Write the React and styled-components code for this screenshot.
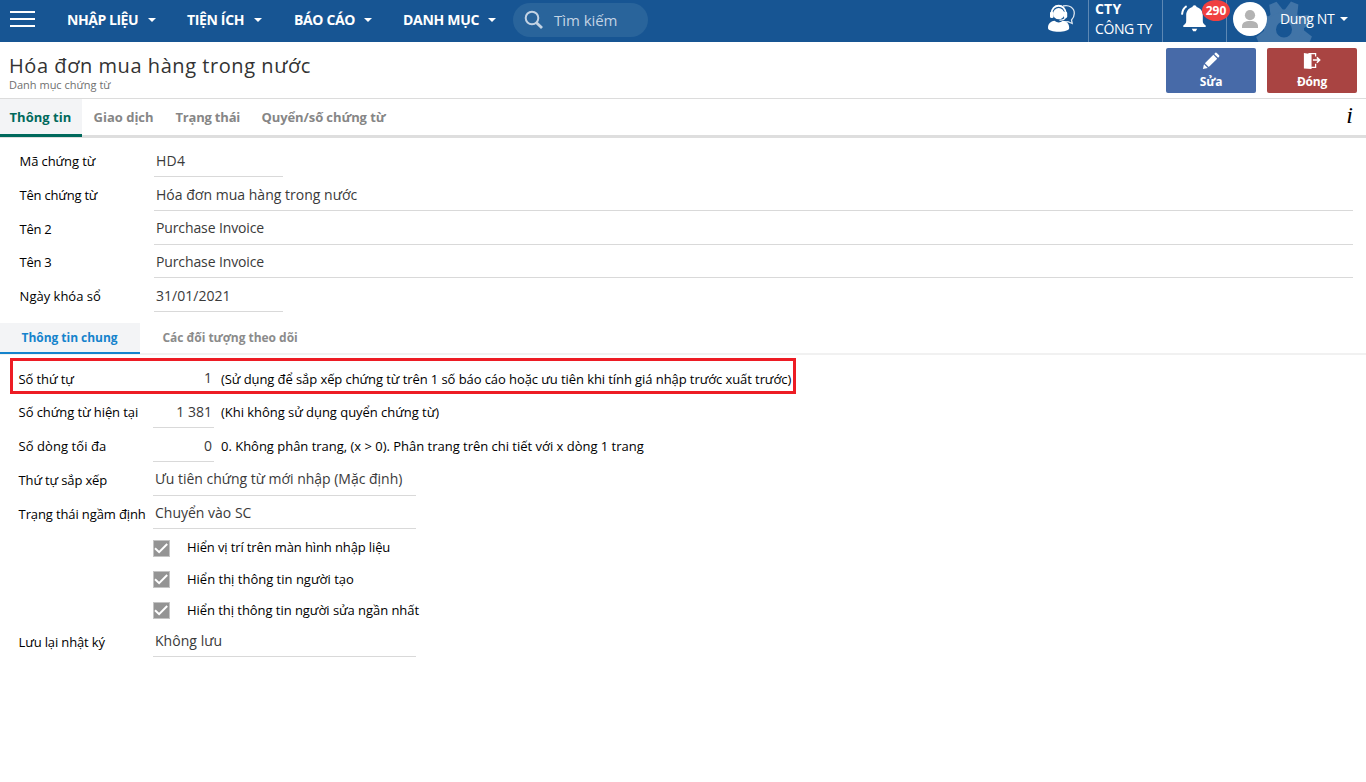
import React from 'react';
import styled, { createGlobalStyle } from 'styled-components';

const GlobalStyle = createGlobalStyle`
  * { box-sizing: border-box; }
  body {
    margin: 0;
    background: #fff;
    color: #111;
    font: 13px/18px 'Open Sans', 'Noto Sans', sans-serif;
    white-space: nowrap;
  }
`;

/* ---------- top bar ---------- */

const TopBar = styled.header`
  display: flex;
  height: 42px;
  overflow: hidden;
  background: #175593;
  color: #fff;
`;

const Hamburger = styled.div`
  display: flex;
  flex-direction: column;
  gap: 5px;
  width: 25px;
  margin: 11px 32px 0 10px;
`;

const HamburgerBar = styled.span`
  height: 2px;
  background: #fff;
`;

const Menu = styled.nav`
  display: flex;
  height: 40px;
`;

const MenuItem = styled.div`
  display: flex;
  align-items: center;
  width: ${(p) => p.$width}px;
  font-size: 14px;
  font-weight: 700;
  letter-spacing: ${(p) => p.$tracking}px;
`;

const MenuLabel = styled.span`
  width: ${(p) => p.$width}px;
`;

const Caret = styled.i`
  border: 4px solid transparent;
  border-top-color: #fff;
  border-bottom: 0;
`;

const Search = styled.div`
  display: flex;
  align-items: center;
  width: 135px;
  height: 34px;
  margin-top: 3px;
  padding-left: 11px;
  gap: 10px;
  border-radius: 17px;
  background: #29649b;
  color: #c3d3e4;
  font-size: 15px;
  letter-spacing: -0.05px;
`;

const TopRight = styled.div`
  display: flex;
  margin-left: auto;
`;

const Support = styled.div`
  width: 40px;
  padding-top: 4px;
`;

const Company = styled.div`
  width: 75px;
  padding-left: 6px;
  border: solid #5d88b4;
  border-width: 0 1px;
  font-size: 14px;
  line-height: 20px;
  letter-spacing: -0.4px;
`;

const CompanyCode = styled.div`
  height: 19px;
  line-height: 18px;
  font-weight: 700;
  letter-spacing: 0.2px;
`;

const Notifications = styled.div`
  position: relative;
  width: 64px;
  padding: 3px 0 0 17px;
  border-right: 1px solid #5d88b4;
`;

const Badge = styled.span`
  position: absolute;
  top: 0;
  left: 39px;
  width: 28px;
  height: 21px;
  border-radius: 50%;
  background: #f04040;
  font-size: 12px;
  font-weight: 700;
  line-height: 21px;
  text-align: center;
`;

const User = styled.div`
  position: relative;
  display: flex;
  width: 139px;
  padding-left: 6px;
`;

const Avatar = styled.div`
  position: relative;
  width: 34px;
  height: 34px;
  margin: 2px 13px 0 0;
  border-radius: 50%;
  background: #fff;
`;

const GearBackdrop = styled.svg`
  position: absolute;
  top: 0;
  left: 29px;
`;

const UserName = styled.span`
  position: relative;
  display: flex;
  align-items: center;
  height: 38px;
  gap: 6px;
  font-size: 14px;
  letter-spacing: -0.35px;
`;

/* ---------- page heading ---------- */

const Heading = styled.section`
  display: flex;
  justify-content: space-between;
  height: 57px;
  padding: 6px 9px 0 9px;
  border-bottom: 1px solid #dcdcdc;
`;

const Title = styled.h1`
  margin: 4px 0 0;
  color: #333;
  font-size: 20px;
  font-weight: 400;
  line-height: 27px;
  letter-spacing: 0.56px;
`;

const Subtitle = styled.div`
  color: #707070;
  font-size: 11px;
  line-height: 11px;
`;

const Actions = styled.div`
  display: flex;
  gap: 11px;
`;

const ActionButton = styled.button`
  display: flex;
  flex-direction: column;
  align-items: center;
  width: 90px;
  height: 45px;
  padding: 4px 0 0;
  border: 0;
  border-radius: 2px;
  background: ${(p) => p.$color};
  color: #fff;
  font: 700 12px/23px 'Open Sans', 'Noto Sans', sans-serif;
  letter-spacing: -0.2px;
`;

/* ---------- tabs ---------- */

const Tabs = styled.nav`
  display: flex;
  gap: 2px;
  height: 39px;
  border-bottom: 3px solid #dedede;
`;

const Tab = styled.div`
  height: 38px;
  padding: 2px 9px 0 9.5px;
  width: ${(p) => p.$width}px;
  border-bottom: 3px solid ${(p) => (p.$active ? '#00695c' : 'transparent')};
  background: ${(p) => (p.$active ? '#f3f4f6' : 'none')};
  color: ${(p) => (p.$active ? '#00695c' : '#868686')};
  font-weight: 700;
  line-height: 33px;
  letter-spacing: ${(p) => p.$tracking}px;
`;

const InfoMark = styled.span`
  margin: 0 13px 0 auto;
  color: #000;
  font: italic 24px/32px 'Liberation Serif', serif;
`;

const SubTabs = styled.nav`
  display: flex;
  height: 32px;
  margin-top: 11px;
  border-bottom: 2px solid #f1f1f1;
`;

const SubTab = styled.div`
  width: ${(p) => p.$width}px;
  height: 31px;
  padding-left: ${(p) => (p.$active ? 21.5 : 22.5)}px;
  border-bottom: 2px solid ${(p) => (p.$active ? '#1583cc' : 'transparent')};
  background: ${(p) => (p.$active ? '#f3f4f6' : 'none')};
  color: ${(p) => (p.$active ? '#1583cc' : '#8b8b8b')};
  font-size: 12px;
  font-weight: 700;
  line-height: 30px;
  letter-spacing: -0.03px;
`;

/* ---------- form ---------- */

const Fields = styled.div`
  display: flex;
  flex-direction: column;
  padding: ${(p) => p.$padding};
`;

const Row = styled.div`
  display: flex;
  align-items: flex-end;
  height: ${(p) => p.$height}px;
`;

const HighlightedRow = styled.div`
  display: flex;
  align-items: center;
  width: 786px;
  height: 36px;
  margin-left: -8px;
  padding: 4px 0 0 5px;
  border: 3px solid #ed1c24;
`;

const Label = styled.label`
  flex: none;
  width: 135px;
  height: 31px;
  padding-left: 0.6px;
  color: #000;
  line-height: ${(p) => (p.$low ? 33 : 31)}px;
  letter-spacing: ${(p) => p.$tracking || 0}px;
`;

const Value = styled.div`
  width: ${(p) => p.$width};
  height: 33px;
  padding: 0 2px;
  border-bottom: 1px solid ${(p) => (p.$plain ? 'transparent' : '#d9d9d9')};
  color: #3a3a3a;
  font-size: 14px;
  line-height: ${(p) => (p.$high ? 32 : 34)}px;
  text-align: ${(p) => (p.$number ? 'right' : 'left')};
  letter-spacing: ${(p) => p.$tracking || 0}px;
`;

const Hint = styled.span`
  height: 31px;
  margin-left: 7px;
  color: #000;
  line-height: ${(p) => (p.$low ? 33 : 31)}px;
  letter-spacing: ${(p) => p.$tracking || 0}px;
`;

const CheckList = styled.div`
  margin: 3px 0 0 135px;
`;

const CheckRow = styled.label`
  display: flex;
  align-items: center;
  gap: 17px;
  height: 31px;
  color: #000;
  letter-spacing: ${(p) => p.$tracking}px;
`;

const CheckText = styled.span`
  margin-top: ${(p) => (p.$high ? -2 : 0)}px;
`;

const CheckBox = styled.span`
  display: flex;
  width: 17px;
  height: 17px;
  margin-top: 2px;
  border: 1px solid #c4c4c4;
  background: #949494;
`;

/* ---------- icons ---------- */

const SearchIcon = () => (
  <svg width="20" height="20" viewBox="0 0 20 20" fill="none" stroke="#c3d3e4">
    <circle cx="8" cy="8" r="6.3" strokeWidth="2" />
    <path d="M12.5 12.7 L18 18" strokeWidth="2.8" />
  </svg>
);

const SupportIcon = () => (
  <svg width="28" height="29" viewBox="0 0 28 29">
    <path d="M15 2 C21 .3 26.5 4 26.3 9.5 C26.2 13 24.5 15 23.5 16 L24.2 19.5 L20 17.6 L16 17.8" fill="none" stroke="#dbe5ef" strokeWidth="1.3" />
    <path d="M3.5 10 C3.2 -1 18 -1 17.8 10" fill="none" stroke="#fff" strokeWidth="1.8" />
    <circle cx="10.7" cy="9.7" r="5.6" fill="#fff" />
    <rect x="2" y="7.5" width="3.6" height="6.5" rx="1.6" fill="#fff" />
    <rect x="15.6" y="7.5" width="3.6" height="6.5" rx="1.6" fill="#fff" />
    <path d="M17.5 13.5 C16.5 15.8 14.5 16.3 11.5 16.2" fill="none" stroke="#fff" strokeWidth="1.2" />
    <path d="M0 24 C0 19.5 2.5 17.6 6.5 16.8 Q10.7 20.3 14.8 16.8 C19 17.6 21.2 19.5 21.2 24 C21.2 29 0 29 0 24Z" fill="#fff" />
  </svg>
);

const BellIcon = () => (
  <svg width="28" height="30" viewBox="0 0 28 30">
    <path d="M14.5 2.2 c1.2 0 2 .8 2 1.8 c4 1 6.3 4.2 6.3 8.4 v5.6 c0 2 1 3.3 2.9 4.4 v1.6 h-22.4 v-1.6 c1.9-1.1 2.9-2.4 2.9-4.4 v-5.6 c0-4.2 2.3-7.4 6.3-8.4 c0-1 .8-1.8 2-1.8z" fill="#fff" />
    <path d="M11.8 25.8 h5.4 l-1.4 2.5 h-2.6z" fill="#fff" />
    <path d="M6.6 3.2 C4 4.8 2.3 7.6 2 11.6" fill="none" stroke="#fff" strokeWidth="2" />
  </svg>
);

const PersonIcon = () => (
  <svg width="34" height="34" viewBox="0 0 34 34" fill="#b3b3b3">
    <circle cx="17" cy="13.2" r="5.1" />
    <path d="M9 26 v-1.5 c0-4 3-5.5 8-5.5 s8 1.5 8 5.5 v1.5z" />
  </svg>
);

const GEAR_TEETH = [22, 67, 112, 157, 202, 247, 292, 337];

const Gear = () => (
  <GearBackdrop width="58" height="42" viewBox="0 0 58 42">
    <circle cx="28" cy="29.5" r="14" fill="none" stroke="#4174a7" strokeWidth="12" />
    <g fill="#4174a7">
      {GEAR_TEETH.map((angle) => (
        <path key={angle} d="M21 12 L24 1 H32 L35 12Z" transform={`rotate(${angle} 28 29.5)`} />
      ))}
    </g>
  </GearBackdrop>
);

const PencilIcon = () => (
  <svg width="20" height="20" viewBox="0 0 20 20" fill="#fff">
    <path d="M1 19 L2.2 13.6 L6.4 17.8Z" />
    <path d="M3.2 12.5 L12.6 3.1 L16.9 7.4 L7.5 16.8Z" />
    <path d="M13.6 2.1 L14.8 .9 Q15.6 .3 16.4 1 L19 3.6 Q19.6 4.4 19 5.2 L17.9 6.4Z" />
  </svg>
);

const ExitIcon = () => (
  <svg width="20" height="20" viewBox="0 0 20 20">
    <path d="M1 1 L9.5 2.4 V19 L1 18.2Z" fill="#fff" />
    <path d="M6 1.7 H14 V5 M14 13 V17 H9" fill="none" stroke="#fff" strokeWidth="1.4" />
    <path d="M11 9 H18.4 M15.4 6 L18.5 9 L15.4 12" fill="none" stroke="#fff" strokeWidth="1.7" />
  </svg>
);

const CheckMark = () => (
  <svg width="15" height="15" viewBox="0 0 15 15" fill="none" stroke="#fff" strokeWidth="2">
    <path d="M1 7.3 L5.1 11.2 L13.2 3" />
  </svg>
);

/* ---------- data ---------- */

const MENU = [
  { label: 'NHẬP LIỆU', width: 120, labelWidth: 81, tracking: -0.45 },
  { label: 'TIỆN ÍCH', width: 107, labelWidth: 67, tracking: -0.35 },
  { label: 'BÁO CÁO', width: 109, labelWidth: 70, tracking: -0.35 },
  { label: 'DANH MỤC', width: 110, labelWidth: 85, tracking: -0.3 },
];

const TABS = [
  { label: 'Thông tin', width: 82, tracking: 0.03, active: true },
  { label: 'Giao dịch', width: 80, tracking: 0 },
  { label: 'Trạng thái', width: 84, tracking: -0.2 },
  { label: 'Quyển/số chứng từ', width: 146, tracking: -0.1 },
];

const FIELDS = [
  { label: 'Mã chứng từ', value: 'HD4', width: '129px', height: 39, tracking: -0.1, valueTracking: 0.2 },
  { label: 'Tên chứng từ', value: 'Hóa đơn mua hàng trong nước', width: '1199px', height: 34, tracking: -0.22, valueTracking: 0.02 },
  { label: 'Tên 2', value: 'Purchase Invoice', width: '1199px', height: 34, tracking: -0.3, valueTracking: -0.12, high: true },
  { label: 'Tên 3', value: 'Purchase Invoice', width: '1199px', height: 33, tracking: -0.3, valueTracking: -0.12 },
  { label: 'Ngày khóa sổ', value: '31/01/2021', width: '129px', height: 34, tracking: 0, valueTracking: 0.02 },
];

const CHECKS = [
  { label: 'Hiển vị trí trên màn hình nhập liệu', tracking: -0.12, high: true },
  { label: 'Hiển thị thông tin người tạo', tracking: 0 },
  { label: 'Hiển thị thông tin người sửa ngần nhất', tracking: -0.05 },
];

export default function App() {
  return (
    <>
      <GlobalStyle />
      <TopBar>
        <Hamburger>
          <HamburgerBar />
          <HamburgerBar />
          <HamburgerBar />
        </Hamburger>
        <Menu>
          {MENU.map((m) => (
            <MenuItem key={m.label} $width={m.width} $tracking={m.tracking}>
              <MenuLabel $width={m.labelWidth}>{m.label}</MenuLabel>
              <Caret />
            </MenuItem>
          ))}
        </Menu>
        <Search>
          <SearchIcon />
          Tìm kiếm
        </Search>
        <TopRight>
          <Support>
            <SupportIcon />
          </Support>
          <Company>
            <CompanyCode>CTY</CompanyCode>
            CÔNG TY
          </Company>
          <Notifications>
            <BellIcon />
            <Badge>290</Badge>
          </Notifications>
          <User>
            <Gear />
            <Avatar>
              <PersonIcon />
            </Avatar>
            <UserName>
              Dung NT
              <Caret />
            </UserName>
          </User>
        </TopRight>
      </TopBar>

      <Heading>
        <div>
          <Title>Hóa đơn mua hàng trong nước</Title>
          <Subtitle>Danh mục chứng từ</Subtitle>
        </div>
        <Actions>
          <ActionButton $color="#476aa8">
            <PencilIcon />
            Sửa
          </ActionButton>
          <ActionButton $color="#a94442">
            <ExitIcon />
            Đóng
          </ActionButton>
        </Actions>
      </Heading>

      <Tabs>
        {TABS.map((t) => (
          <Tab key={t.label} $width={t.width} $tracking={t.tracking} $active={t.active}>
            {t.label}
          </Tab>
        ))}
        <InfoMark>i</InfoMark>
      </Tabs>

      <Fields $padding="0 0 0 19px">
        {FIELDS.map((f) => (
          <Row key={f.label} $height={f.height}>
            <Label $tracking={f.tracking}>{f.label}</Label>
            <Value $width={f.width} $tracking={f.valueTracking} $high={f.high}>{f.value}</Value>
          </Row>
        ))}
      </Fields>

      <SubTabs>
        <SubTab $width={140} $active>Thông tin chung</SubTab>
        <SubTab $width={180}>Các đối tượng theo dõi</SubTab>
      </SubTabs>

      <Fields $padding="3px 0 0 18px">
        <HighlightedRow>
          <Label $tracking={-0.12} $low>Số thứ tự</Label>
          <Value $width="61px" $number $plain $high>1</Value>
          <Hint $tracking={-0.08} $low>
            (Sử dụng để sắp xếp chứng từ trên 1 số báo cáo hoặc ưu tiên khi tính giá nhập trước xuất trước)
          </Hint>
        </HighlightedRow>
        <Row $height={34}>
          <Label $tracking={-0.08}>Số chứng từ hiện tại</Label>
          <Value $width="61px" $number>1 381</Value>
          <Hint $tracking={-0.04}>(Khi không sử dụng quyển chứng từ)</Hint>
        </Row>
        <Row $height={34}>
          <Label $tracking={0.06}>Số dòng tối đa</Label>
          <Value $width="61px" $number>0</Value>
          <Hint $tracking={-0.015}>{'0. Không phân trang, (x > 0). Phân trang trên chi tiết với x dòng 1 trang'}</Hint>
        </Row>
        <Row $height={34}>
          <Label $tracking={-0.15}>Thứ tự sắp xếp</Label>
          <Value $width="263px" $tracking={-0.02} $high>Ưu tiên chứng từ mới nhập (Mặc định)</Value>
        </Row>
        <Row $height={33}>
          <Label $tracking={-0.12} $low>Trạng thái ngầm định</Label>
          <Value $width="263px" $tracking={0}>Chuyển vào SC</Value>
        </Row>
        <CheckList>
          {CHECKS.map((c) => (
            <CheckRow key={c.label} $tracking={c.tracking}>
              <CheckBox>
                <CheckMark />
              </CheckBox>
              <CheckText $high={c.high}>{c.label}</CheckText>
            </CheckRow>
          ))}
        </CheckList>
        <Row $height={32}>
          <Label $tracking={-0.15} $low>Lưu lại nhật ký</Label>
          <Value $width="263px" $tracking={0.05}>Không lưu</Value>
        </Row>
      </Fields>
    </>
  );
}
